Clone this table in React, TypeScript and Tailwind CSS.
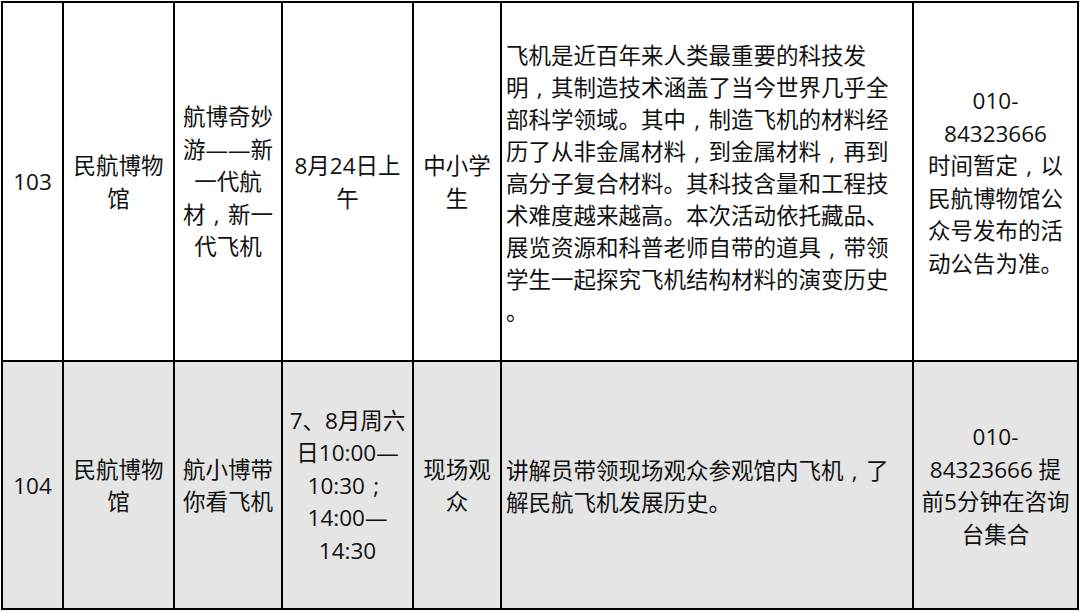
const font = { fontFamily: '"Open Sans", "Noto Sans CJK SC", sans-serif' };

type Row = {
  no: string;
  venue: string[];
  title: string[];
  time: string[];
  audience: string[];
  desc: string[];
  contact: string[];
  shade: boolean;
};

const rows: Row[] = [
  {
    no: "103",
    venue: ["民航博物", "馆"],
    title: ["航博奇妙", "游——新", "一代航", "材，新一", "代飞机"],
    time: ["8月24日上", "午"],
    audience: ["中小学", "生"],
    desc: [
      "飞机是近百年来人类最重要的科技发",
      "明，其制造技术涵盖了当今世界几乎全",
      "部科学领域。其中，制造飞机的材料经",
      "历了从非金属材料，到金属材料，再到",
      "高分子复合材料。其科技含量和工程技",
      "术难度越来越高。本次活动依托藏品、",
      "展览资源和科普老师自带的道具，带领",
      "学生一起探究飞机结构材料的演变历史",
      "。",
    ],
    contact: ["010-", "84323666", "时间暂定，以", "民航博物馆公", "众号发布的活", "动公告为准。"],
    shade: false,
  },
  {
    no: "104",
    venue: ["民航博物", "馆"],
    title: ["航小博带", "你看飞机"],
    time: ["7、8月周六", "日10:00—", "10:30；", "14:00—", "14:30"],
    audience: ["现场观", "众"],
    desc: ["讲解员带领现场观众参观馆内飞机，了", "解民航飞机发展历史。"],
    contact: ["010-", "84323666 提", "前5分钟在咨询", "台集合"],
    shade: true,
  },
];

// full-width comma / semicolon drawn centred in a 1em box, as in the source document
function Punct({ text }: { text: string }) {
  const parts = text.split(/([，；])/);
  return (
    <>
      {parts.map((p, i) =>
        p === "，" || p === "；" ? (
          <span key={i} className="inline-block w-[1em] text-center">
            {p === "，" ? "," : ";"}
          </span>
        ) : (
          <span key={i}>{p}</span>
        )
      )}
    </>
  );
}

function Cell({ lines, shade, left }: { lines: string[]; shade: boolean; left?: boolean }) {
  return (
    <div
      className={`flex items-center ${left ? "justify-start pl-[4px] text-left leading-[32px]" : "justify-center text-center leading-[32.5px]"} ${
        shade ? "bg-[#e5e5e5]" : "bg-white"
      }`}
    >
      <div className={left ? "pt-[4px]" : "pt-[2px]"}>
        {lines.map((l, i) => (
          <div key={i} className="whitespace-nowrap">
            <Punct text={l} />
          </div>
        ))}
      </div>
    </div>
  );
}

export default function App() {
  return (
    <div className="w-[1080px] h-[612px] bg-white pl-[1px] pt-[1px]" style={font}>
      <div className="grid w-[1078px] grid-cols-[59px_109px_106px_129px_86px_410px_163px] grid-rows-[357px_246px] gap-[2px] bg-black p-[2px] text-[22.5px] text-[#111]">
        {rows.map((r) => (
          <div key={r.no} className="contents">
            <Cell lines={[r.no]} shade={r.shade} />
            <Cell lines={r.venue} shade={r.shade} />
            <Cell lines={r.title} shade={r.shade} />
            <Cell lines={r.time} shade={r.shade} />
            <Cell lines={r.audience} shade={r.shade} />
            <Cell lines={r.desc} shade={r.shade} left />
            <Cell lines={r.contact} shade={r.shade} />
          </div>
        ))}
      </div>
    </div>
  );
}
